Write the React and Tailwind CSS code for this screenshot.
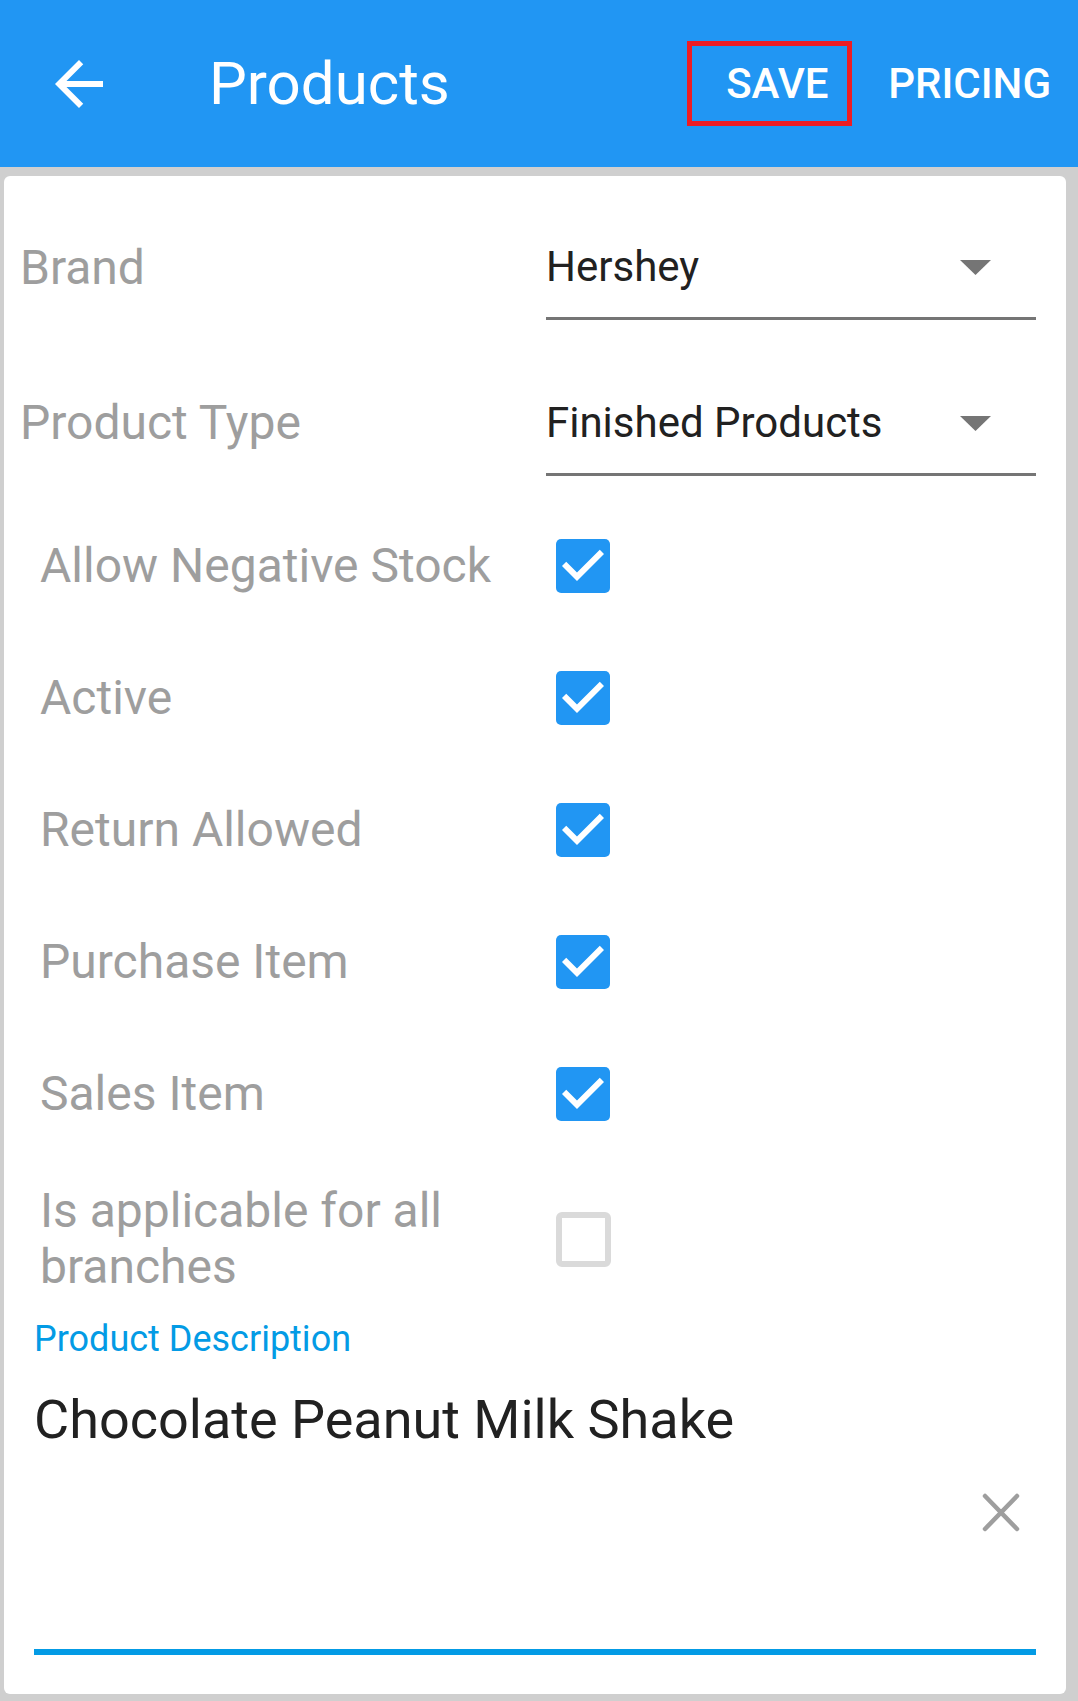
import React from "react";

const font = { fontFamily: "Roboto, 'Noto Sans', sans-serif" };

const Checked = () => (
  <svg width="54" height="54" viewBox="3 3 18 18" className="shrink-0">
    <rect x="3" y="3" width="18" height="18" rx="1.7" fill="#2196f3" />
    <path d="M10 17l-5-5 1.41-1.41L10 14.17l7.59-7.59L19 8l-9 9z" fill="#fff" />
  </svg>
);

const Unchecked = () => (
  <div className="w-[55px] h-[55px] shrink-0 rounded-[6px] border-[6px] border-[#dadada] bg-white" />
);

const Caret = () => (
  <svg width="31" height="15" viewBox="0 0 31 15" className="mr-[45px]">
    <path d="M0 0h31L15.5 15z" fill="#757575" />
  </svg>
);

const Dropdown = ({ value, className }) => (
  <div className={`w-[490px] h-[77px] border-b-[3px] border-[#757575] flex items-start ${className}`}>
    <div className="flex items-center justify-between w-full h-[48px]">
      <span className="text-[42px] leading-[48px] text-[#212121]">{value}</span>
      <Caret />
    </div>
  </div>
);

const CheckRow = ({ label }) => (
  <div className="flex items-center h-[132px]">
    <span className="w-[552px] pl-[36px] text-[48px] leading-[56px] text-[#9e9e9e]">{label}</span>
    <Checked />
  </div>
);

const App = () => {
  return (
    <div className="min-h-[1701px] w-full bg-[#cfcfcf]" style={font}>
      {/* Toolbar */}
      <div className="h-[167px] bg-[#2196f3] flex items-center text-white">
        <svg width="72" height="72" viewBox="0 0 24 24" className="ml-[43px] shrink-0">
          <path d="M20 11H7.83l5.59-5.59L12 4l-8 8 8 8 1.41-1.41L7.83 13H20v-2z" fill="#fff" />
        </svg>
        <span className="ml-[94px] text-[60px] leading-[70px]">Products</span>
        <div className="flex-1" />
        <div className="w-[165px] h-[85px] border-[5px] border-[#ed1c24] flex items-center pl-[34px]">
          <span className="text-[42px] leading-[50px] font-medium">SAVE</span>
        </div>
        <span className="ml-[36px] mr-[27px] text-[42px] leading-[50px] font-medium">PRICING</span>
      </div>

      {/* Form card */}
      <div className="mt-[9px] ml-[4px] mr-[12px] bg-white rounded-[6px] pb-[39px]">
        <div className="flex h-[144px]">
          <span className="w-[542px] pl-[16px] mt-[64px] text-[48px] leading-[56px] h-[56px] text-[#9e9e9e]">Brand</span>
          <Dropdown value="Hershey" className="mt-[67px]" />
        </div>
        <div className="flex h-[156px]">
          <span className="w-[542px] pl-[16px] mt-[75px] text-[48px] leading-[56px] h-[56px] text-[#9e9e9e]">Product Type</span>
          <Dropdown value="Finished Products" className="mt-[79px]" />
        </div>

        <div className="mt-[24px]">
          <CheckRow label="Allow Negative Stock" />
          <CheckRow label="Active" />
          <CheckRow label="Return Allowed" />
          <CheckRow label="Purchase Item" />
          <CheckRow label="Sales Item" />
          <div className="flex items-center h-[158px]">
            <span className="w-[552px] pl-[36px] pr-[90px] text-[48px] leading-[56px] text-[#9e9e9e]">
              Is applicable for all branches
            </span>
            <Unchecked />
          </div>
        </div>

        {/* Description field */}
        <div className="px-[30px]">
          <div className="text-[36px] leading-[42px] text-[#039be5]">Product Description</div>
          <div className="mt-[28px] text-[54px] leading-[64px] text-[#212121]">Chocolate Peanut Milk Shake</div>
          <div className="mt-[41px] flex justify-end pr-[16px]">
            <svg width="38" height="39" viewBox="0 0 38 39">
              <path d="M3 3L35 36M35 3L3 36" stroke="#9e9e9e" strokeWidth="4.5" strokeLinecap="round" />
            </svg>
          </div>
          <div className="mt-[117px] h-[6px] bg-[#039be5]" />
        </div>
      </div>
    </div>
  );
};

export default App;
